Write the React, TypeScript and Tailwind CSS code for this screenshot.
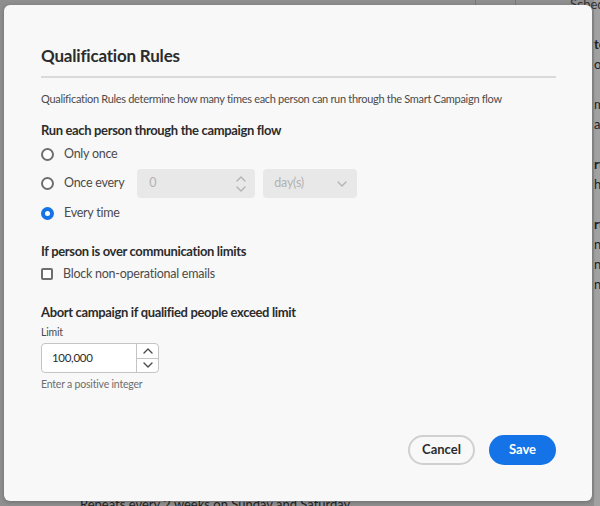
import React from 'react'

function Radio({ checked }: { checked?: boolean }) {
  if (checked) {
    return (
      <span className="w-[13px] h-[13px] rounded-full bg-[#1473e6] flex items-center justify-center shrink-0">
        <span className="w-[5px] h-[5px] rounded-full bg-white" />
      </span>
    )
  }
  return <span className="w-[13px] h-[13px] rounded-full border-2 border-[#6e6e6e] bg-white shrink-0" />
}

function Chevron({ up, className }: { up?: boolean; className?: string }) {
  return (
    <svg width="10" height="6" viewBox="0 0 10 6" className={className}>
      <path d={up ? 'M1 5 L5 1 L9 5' : 'M1 1 L5 5 L9 1'} fill="none" stroke="currentColor" strokeWidth="1.4" strokeLinecap="round" strokeLinejoin="round" />
    </svg>
  )
}

export default function App() {
  return (
    <div className="relative w-[600px] h-[506px] overflow-hidden bg-[#8f8f8f]" style={{ fontFamily: 'Lato, "Open Sans", sans-serif' }}>
      {/* page behind the overlay */}
      <div className="absolute left-[475px] top-0 h-[5px] w-px bg-[#777]" />
      <div className="absolute left-[515px] top-0 h-[5px] w-px bg-[#777]" />
      <div className="absolute left-[594px] top-0 w-[60px] bg-[#a1a1a1] h-full text-[13px] leading-[20px] text-[#222]">
        <div className="mt-[-6px] ml-[-24px] text-[#333]">Schedule</div>
        <div className="mt-[20px] font-bold">te</div>
        <div>or</div>
        <div className="mt-[20px]">m</div>
        <div>ay</div>
        <div className="mt-[20px] font-bold">rt</div>
        <div>h</div>
        <div className="mt-[20px] font-bold">rt</div>
        <div>n.</div>
        <div>n.</div>
        <div>n.</div>
      </div>
      <div className="absolute left-[80px] top-[495px] text-[13px] text-[#222]">Repeats every 2 weeks on Sunday and Saturday</div>

      {/* dialog */}
      <div className="absolute left-[4px] top-[5px] w-[588px] h-[496px] rounded-[6px] bg-[#f8f8f8] shadow-[0_1px_4px_rgba(0,0,0,0.25)] pl-[37px] pr-[36px] pt-[40px] flex flex-col text-[#2c2c2c]">
        <h1 className="text-[17px] leading-[22px] font-bold tracking-[-0.2px] text-[#2c2c2c]">Qualification Rules</h1>
        <div className="mt-[9px] h-[2px] bg-[#dadada]" />
        <p className="mt-[13px] text-[11px] leading-[16px] tracking-[-0.3px] text-[#4b4b4b]">
          Qualification Rules determine how many times each person can run through the Smart Campaign flow
        </p>

        <h2 className="mt-[14px] text-[13px] leading-[18px] font-bold tracking-[-0.35px]">Run each person through the campaign flow</h2>
        <div className="mt-[3px] flex flex-col gap-[3px] text-[12.5px] tracking-[-0.25px] text-[#4b4b4b]">
          <label className="h-[24px] flex items-center gap-[10px]">
            <Radio />
            <span>Only once</span>
          </label>
          <label className="h-[29px] flex items-center gap-[10px]">
            <Radio />
            <span>Once every</span>
            <div className="ml-[3px] w-[118px] h-[29px] rounded-[4px] bg-[#e8e8e8] flex items-center justify-between pl-[12px] pr-[9px] text-[#b3b3b3]">
              <span>0</span>
              <span className="flex flex-col gap-[4px]">
                <Chevron up />
                <Chevron />
              </span>
            </div>
            <div className="ml-[-2px] w-[94px] h-[29px] rounded-[4px] bg-[#e8e8e8] flex items-center justify-between pl-[11px] pr-[10px] text-[#b3b3b3]">
              <span>day(s)</span>
              <Chevron />
            </div>
          </label>
          <label className="h-[24px] flex items-center gap-[10px]">
            <Radio checked />
            <span>Every time</span>
          </label>
        </div>

        <h2 className="mt-[17px] text-[13px] leading-[18px] font-bold tracking-[-0.35px]">If person is over communication limits</h2>
        <label className="mt-[2px] h-[24px] flex items-center gap-[10px] text-[12.5px] tracking-[-0.25px] text-[#4b4b4b]">
          <span className="w-[12px] h-[12px] rounded-[2px] border-2 border-[#6e6e6e] bg-white shrink-0" />
          <span>Block non-operational emails</span>
        </label>

        <h2 className="mt-[17px] text-[13px] leading-[18px] font-bold tracking-[-0.35px]">Abort campaign if qualified people exceed limit</h2>
        <div className="mt-[3px] text-[10.5px] leading-[16px] tracking-[-0.2px] text-[#4b4b4b]">Limit</div>
        <div className="mt-[3px] w-[118px] h-[30px] rounded-[4px] border border-[#c4c4c4] bg-white flex">
          <div className="flex-1 flex items-center pl-[10px] text-[11.5px] tracking-[-0.3px] text-[#2c2c2c]">100,000</div>
          <div className="w-[22px] border-l border-[#c4c4c4] flex flex-col text-[#4b4b4b]">
            <div className="flex-1 flex items-center justify-center border-b border-[#c4c4c4]">
              <Chevron up />
            </div>
            <div className="flex-1 flex items-center justify-center">
              <Chevron />
            </div>
          </div>
        </div>
        <div className="mt-[3px] text-[10.5px] leading-[16px] tracking-[-0.2px] text-[#6e6e6e]">Enter a positive integer</div>

        <div className="mt-auto mb-[36px] flex justify-end gap-[14px]">
          <button className="w-[67px] h-[30px] rounded-full border-2 border-[#d0d0d0] bg-[#f8f8f8] text-[13px] font-bold text-[#2c2c2c]">Cancel</button>
          <button className="w-[67px] h-[30px] rounded-full bg-[#1473e6] text-[13px] font-bold text-white">Save</button>
        </div>
      </div>
    </div>
  )
}
